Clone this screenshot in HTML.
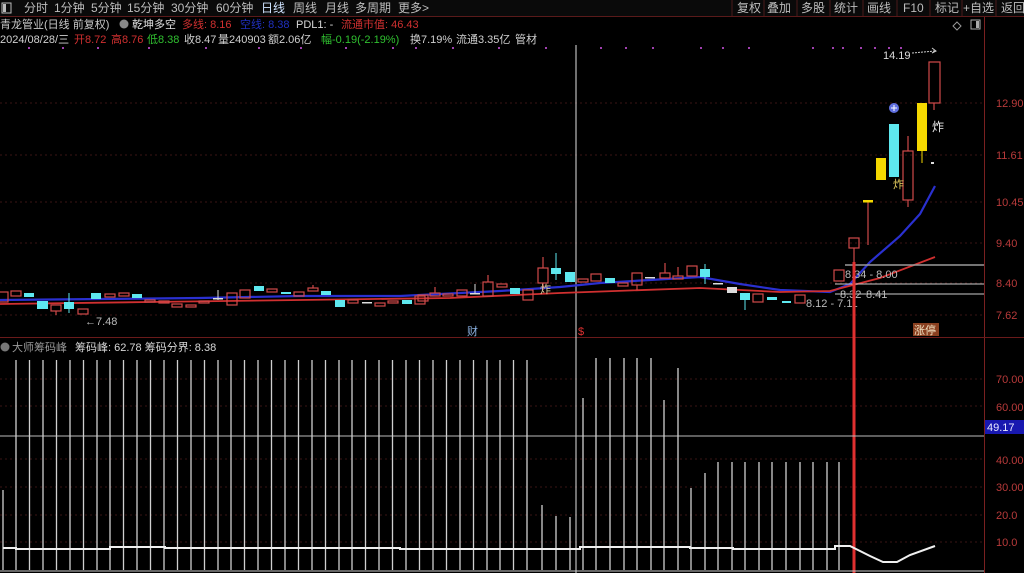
<!DOCTYPE html>
<html><head><meta charset="utf-8"><style>
html,body{margin:0;padding:0;background:#000;width:1024px;height:573px;overflow:hidden}
svg{display:block}
text{font-family:"Liberation Sans","Noto Sans CJK SC",sans-serif}
</style></head><body>
<svg width="1024" height="573" viewBox="0 0 1024 573" xmlns="http://www.w3.org/2000/svg">
<rect width="1024" height="573" fill="#000"/>
<!-- toolbar -->
<rect x="0" y="0" width="1024" height="16" fill="#0a0a0a"/>
<line x1="0" y1="16.5" x2="1024" y2="16.5" stroke="#5a1a1a"/>
<rect x="2" y="3" width="9" height="10" fill="none" stroke="#bbb"/><rect x="3" y="4" width="3" height="8" fill="#bbb"/>
<g font-size="12" fill="#bdbdbd">
<text x="24" y="12">分时</text><text x="54" y="12">1分钟</text><text x="91" y="12">5分钟</text><text x="127" y="12">15分钟</text><text x="171" y="12">30分钟</text><text x="216" y="12">60分钟</text><text x="261" y="12" fill="#cfe3ff">日线</text><text x="293" y="12">周线</text><text x="325" y="12">月线</text><text x="355" y="12">多周期</text><text x="398" y="12">更多&gt;</text>
<text x="737" y="12">复权</text><text x="767" y="12">叠加</text><text x="801" y="12">多股</text><text x="834" y="12">统计</text><text x="867" y="12">画线</text><text x="903" y="12">F10</text><text x="935" y="12">标记</text><text x="963" y="12">+自选</text><text x="1001" y="12">返回</text>
</g>
<g stroke="#4a1a1a"><line x1="732" y1="0" x2="732" y2="16"/><line x1="764" y1="0" x2="764" y2="16"/><line x1="797" y1="0" x2="797" y2="16"/><line x1="830" y1="0" x2="830" y2="16"/><line x1="863" y1="0" x2="863" y2="16"/><line x1="897" y1="0" x2="897" y2="16"/><line x1="930" y1="0" x2="930" y2="16"/><line x1="962" y1="0" x2="962" y2="16"/><line x1="996" y1="0" x2="996" y2="16"/></g>
<!-- info lines -->
<g font-size="11">
<text x="0" y="28" fill="#c8c8c8">青龙管业(日线 前复权)</text>
<circle cx="124" cy="24" r="4.5" fill="#888"/>
<text x="132" y="28" fill="#e0e0e0">乾坤多空</text>
<text x="182" y="28" fill="#d03030">多线: 8.16</text>
<text x="240" y="28" fill="#2030c0">空线: 8.38</text>
<text x="296" y="28" fill="#d8d8d8">PDL1: -</text>
<text x="341" y="28" fill="#d03030">流通市值: 46.43</text>
<text x="0" y="43" fill="#d0d0d0">2024/08/28/三</text>
<text x="74" y="43" fill="#d03030">开8.72</text>
<text x="111" y="43" fill="#d03030">高8.76</text>
<text x="147" y="43" fill="#30c030">低8.38</text>
<text x="184" y="43" fill="#d0d0d0">收8.47</text>
<text x="218" y="43" fill="#d0d0d0">量240903</text>
<text x="268" y="43" fill="#d0d0d0">额2.06亿</text>
<text x="321" y="43" fill="#30c030">幅-0.19(-2.19%)</text>
<text x="410" y="43" fill="#d0d0d0">换7.19%</text>
<text x="456" y="43" fill="#d0d0d0">流通3.35亿</text>
<text x="515" y="43" fill="#d0d0d0">管材</text>
</g>
<path d="M957 22l4 4-4 4-4-4z" fill="none" stroke="#999"/><rect x="971" y="20" width="9" height="9" fill="none" stroke="#aaa"/><rect x="976" y="21" width="3" height="7" fill="#aaa"/>
<!-- axis -->
<line x1="984.5" y1="17" x2="984.5" y2="573" stroke="#7a2020"/>
<line x1="0" y1="337.5" x2="1024" y2="337.5" stroke="#6a1a1a"/>
<g stroke="#3a1414" stroke-dasharray="2 3"><line x1="0" y1="103" x2="984" y2="103"/><line x1="0" y1="155" x2="984" y2="155"/><line x1="0" y1="202" x2="984" y2="202"/><line x1="0" y1="243" x2="984" y2="243"/><line x1="0" y1="283" x2="984" y2="283"/><line x1="0" y1="315" x2="984" y2="315"/>
<line x1="0" y1="379" x2="984" y2="379"/><line x1="0" y1="406" x2="984" y2="406"/><line x1="0" y1="459" x2="984" y2="459"/><line x1="0" y1="487" x2="984" y2="487"/><line x1="0" y1="515" x2="984" y2="515"/><line x1="0" y1="542" x2="984" y2="542"/></g>
<g font-size="11" fill="#b83a3a">
<text x="996" y="107">12.90</text><text x="996" y="159">11.61</text><text x="996" y="206">10.45</text><text x="996" y="247">9.40</text><text x="996" y="287">8.40</text><text x="996" y="319">7.62</text>
<text x="996" y="383">70.00</text><text x="996" y="411">60.00</text><text x="996" y="464">40.00</text><text x="996" y="491">30.00</text><text x="996" y="519">20.0</text><text x="996" y="546">10.0</text>
</g>
<rect x="985" y="420" width="39" height="14" fill="#1818b0"/><text x="987" y="431" font-size="11" fill="#e8e8ff">49.17</text>
<!-- purple dots -->
<g fill="#a040b0"><rect x="28" y="47" width="2" height="2"/><rect x="62" y="47" width="2" height="2"/><rect x="97" y="47" width="2" height="2"/><rect x="148" y="47" width="2" height="2"/><rect x="205" y="47" width="2" height="2"/><rect x="258" y="47" width="2" height="2"/><rect x="300" y="47" width="2" height="2"/><rect x="345" y="47" width="2" height="2"/><rect x="392" y="47" width="2" height="2"/><rect x="415" y="47" width="2" height="2"/><rect x="452" y="47" width="2" height="2"/><rect x="498" y="47" width="2" height="2"/><rect x="545" y="47" width="2" height="2"/><rect x="600" y="47" width="2" height="2"/><rect x="625" y="47" width="2" height="2"/><rect x="652" y="47" width="2" height="2"/><rect x="700" y="47" width="2" height="2"/><rect x="722" y="47" width="2" height="2"/><rect x="748" y="47" width="2" height="2"/><rect x="812" y="47" width="2" height="2"/><rect x="832" y="47" width="2" height="2"/><rect x="842" y="47" width="2" height="2"/><rect x="860" y="47" width="2" height="2"/><rect x="874" y="47" width="2" height="2"/><rect x="888" y="47" width="2" height="2"/><rect x="900" y="47" width="2" height="2"/></g>
<!-- vertical marker line -->
<line x1="576" y1="45" x2="576" y2="573" stroke="#e0e0e0"/>
<!-- MA lines -->
<path d="M0 300 L100 299 L200 298 L300 296 L400 296 L500 291 L560 287 L600 283 L650 280 L700 277 L740 284 L780 290 L830 292 L850 284 L870 262 L900 236 L920 214 L935 186" fill="none" stroke="#2a30d0" stroke-width="2.2"/>
<path d="M0 304 L150 302 L300 300 L450 298 L560 293 L700 288 L780 292 L830 291 L880 278 L935 257" fill="none" stroke="#d03030" stroke-width="1.8"/>
<!-- candles -->
<g stroke="#d04a4a" fill="none" stroke-width="1.2">
<rect x="-2" y="292" width="10" height="10"/><rect x="11" y="291" width="10" height="5"/><rect x="51" y="305" width="10" height="6"/><line x1="56" y1="311" x2="56" y2="315"/><rect x="78" y="309" width="10" height="5"/>
<rect x="105" y="294" width="10" height="3"/><rect x="119" y="293" width="10" height="3"/><rect x="145" y="300" width="10" height="2"/><rect x="159" y="301" width="10" height="2"/><rect x="172" y="304" width="10" height="3"/><rect x="186" y="305" width="10" height="2"/><rect x="199" y="301" width="10" height="2"/>
<rect x="227" y="293" width="10" height="12"/><rect x="240" y="290" width="10" height="8"/><rect x="267" y="289" width="10" height="3"/><rect x="294" y="292" width="10" height="4"/><rect x="308" y="288" width="10" height="3"/><line x1="313" y1="285" x2="313" y2="288"/>
<rect x="348" y="300" width="10" height="3"/><rect x="375" y="303" width="10" height="3"/><rect x="388" y="301" width="10" height="2"/><rect x="415" y="296" width="10" height="8"/>
<rect x="418" y="295" width="10" height="6"/><rect x="430" y="293" width="10" height="3"/><line x1="435" y1="287" x2="435" y2="293"/><rect x="443" y="294" width="10" height="2"/><rect x="457" y="290" width="10" height="6"/><rect x="483" y="282" width="10" height="14"/><line x1="488" y1="275" x2="488" y2="282"/><rect x="497" y="284" width="10" height="3"/><rect x="523" y="290" width="10" height="10"/>
<rect x="538" y="268" width="10" height="15"/><line x1="543" y1="257" x2="543" y2="268"/><line x1="543" y1="283" x2="543" y2="290"/>
<rect x="578" y="279" width="10" height="3"/><rect x="591" y="274" width="10" height="7"/><rect x="618" y="283" width="10" height="3"/><rect x="632" y="273" width="10" height="12"/><line x1="637" y1="285" x2="637" y2="290"/><rect x="660" y="273" width="10" height="5"/><line x1="665" y1="263" x2="665" y2="273"/><rect x="673" y="276" width="10" height="3"/><line x1="678" y1="267" x2="678" y2="276"/><rect x="687" y="266" width="10" height="10"/>
<rect x="753" y="294" width="10" height="8"/><rect x="795" y="295" width="10" height="8"/><rect x="834" y="270" width="10" height="11"/><rect x="849" y="238" width="10" height="10"/><line x1="854" y1="248" x2="854" y2="262"/>
<line x1="868" y1="201" x2="868" y2="245"/><rect x="903" y="151" width="10" height="49"/><line x1="908" y1="136" x2="908" y2="151"/><line x1="908" y1="200" x2="908" y2="207"/>
<rect x="929" y="62" width="11" height="41"/><line x1="934" y1="103" x2="934" y2="110"/>
</g>
<g fill="#5ee8ef">
<rect x="24" y="293" width="10" height="4"/><rect x="37" y="301" width="11" height="8"/><rect x="64" y="302" width="10" height="7"/><rect x="68.5" y="293" width="1" height="20"/><rect x="91" y="293" width="10" height="6"/><rect x="132" y="294" width="10" height="4"/><rect x="254" y="286" width="10" height="5"/><rect x="281" y="292" width="10" height="2"/><rect x="321" y="291" width="10" height="4"/><rect x="335" y="300" width="10" height="7"/><rect x="402" y="300" width="10" height="4"/>
<rect x="510" y="288" width="10" height="6"/><rect x="551" y="268" width="10" height="6"/><rect x="555.5" y="253" width="1" height="27"/><rect x="565" y="272" width="10" height="10"/><rect x="605" y="278" width="10" height="5"/><rect x="700" y="269" width="10" height="8"/><rect x="704.5" y="264" width="1" height="20"/><rect x="740" y="293" width="10" height="7"/><rect x="744.5" y="300" width="1" height="10"/><rect x="767" y="297" width="10" height="3"/><rect x="782" y="301" width="9" height="2"/>
<rect x="889" y="124" width="10" height="53"/>
</g>
<g fill="#ddd"><rect x="213" y="298" width="10" height="1.5"/><rect x="217.5" y="290" width="1" height="10"/><rect x="362" y="302" width="10" height="1.5"/><rect x="470" y="293" width="10" height="1.5"/><rect x="474.5" y="284" width="1" height="9"/><rect x="645" y="277" width="10" height="1.5"/><rect x="713" y="283" width="10" height="1.5"/><rect x="727" y="287" width="10" height="6"/><rect x="931" y="162" width="3" height="2"/></g>
<g fill="#f5d800"><rect x="863" y="200" width="10" height="2.5"/><rect x="876" y="158" width="10" height="22"/><rect x="917" y="103" width="10" height="48"/><rect x="921.5" y="151" width="1" height="12"/></g>
<circle cx="894" cy="108" r="5" fill="#6070e0"/><path d="M891 108h6M894 105v6" stroke="#fff" stroke-width="1"/>
<!-- right-side level lines -->
<line x1="845" y1="265" x2="984" y2="265" stroke="#9a9a9a" stroke-width="1.5"/>
<line x1="835" y1="284" x2="984" y2="284" stroke="#ccc"/>
<line x1="835" y1="294" x2="984" y2="294" stroke="#ccc"/>
<g font-size="11" fill="#bbb">
<text x="845" y="278">8.34 - 8.00</text><text x="840" y="298">8.32</text><text x="866" y="298">8.41</text><text x="806" y="307">8.12 - 7.11</text>
<text x="883" y="59" fill="#ddd">14.19</text><text x="85" y="325">←7.48</text>
</g>
<path d="M912 53 L935 51" stroke="#ccc" stroke-dasharray="2 1"/><path d="M932 48l4 3-4 2" fill="none" stroke="#ccc"/>
<text x="932" y="131" font-size="12" fill="#eee">炸</text>
<text x="540" y="293" font-size="11" fill="#e0d0a0">炸</text>
<text x="893" y="188" font-size="11" fill="#e8d060">炸</text>
<!-- bottom labels main -->
<text x="467" y="335" font-size="11" fill="#8ab0e0">财</text>
<text x="578" y="335" font-size="11" fill="#e03030">$</text>
<rect x="913" y="323" width="26" height="13" fill="#8a4020"/><text x="914" y="334" font-size="11" fill="#f0e0c0">涨停</text>
<!-- red vertical -->
<line x1="854" y1="262" x2="854" y2="573" stroke="#e03030" stroke-width="3"/>
<!-- lower panel -->
<circle cx="5" cy="347" r="4.5" fill="#777"/>
<text x="12" y="351" font-size="11" fill="#9a9a9a">大师筹码峰</text>
<text x="75" y="351" font-size="11" fill="#d8d8d8">筹码峰: 62.78  筹码分界: 8.38</text>
<line x1="0" y1="436" x2="984" y2="436" stroke="#bbb"/>
<path stroke="#d0d0d0" stroke-width="1.3" fill="none" d="M3 490V570M16 360V570M29.5 360V570M43 360V570M56.5 360V570M70 360V570M83.5 360V570M97 360V570M110 360V570M123.5 360V570M137 360V570M150.5 360V570M164 360V570M177.5 360V570M191 360V570M204.5 360V570M218 360V570M231 360V570M244.5 360V570M258 360V570M271.5 360V570M285 360V570M298.5 360V570M312 360V570M325.5 360V570M339 360V570M352 360V570M365.5 360V570M379 360V570M392.5 360V570M406 360V570M419.5 360V570M433 360V570M446.5 360V570M460 360V570M473.5 360V570M487 360V570M500 360V570M513.5 360V570M527 360V570M542 505V570M556 516V570M570 517V570M583 398V570M596 358V570M610 358V570M624 358V570M637 358V570M651 358V570M664 400V570M678 368V570M691 488V570M705 473V570M718 462V570M732 462V570M745 462V570M759 462V570M772 462V570M786 462V570M800 462V570M813 462V570M827 462V570M839 462V570"/>
<path d="M3 548H16V549H110V547H165V548H400V549H580V547H690V548H733V549H835V546H850L870 556L883 562H897L910 555L935 546" fill="none" stroke="#f0f0f0" stroke-width="2"/>
<line x1="0" y1="571" x2="984" y2="571" stroke="#ccc"/>
</svg>
</body></html>
